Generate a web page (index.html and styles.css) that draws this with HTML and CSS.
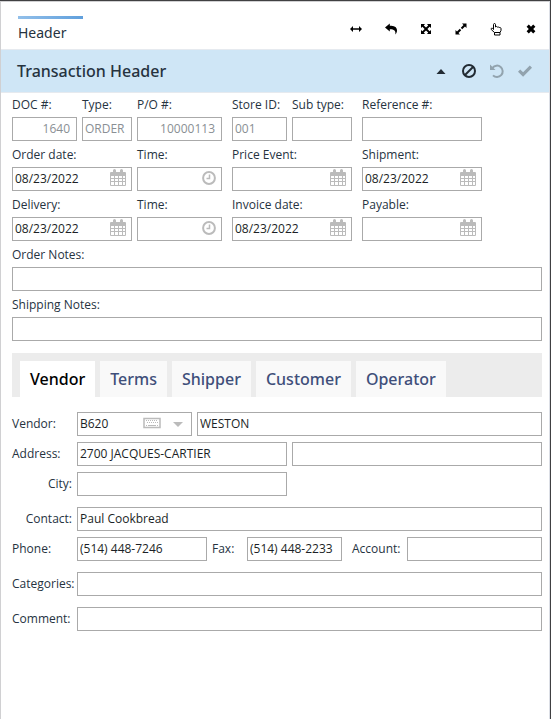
FILE: index.html
```html
<!DOCTYPE html>
<html lang="en">
<head>
<meta charset="utf-8">
<title>Transaction Header</title>
<link rel="stylesheet" href="styles.css">
</head>
<body>
<svg class="defs" aria-hidden="true">
  <symbol id="calendar" viewBox="0 0 16 18">
    <path fill="currentColor" d="M1 3h2V1.500a1.500 1.500 0 0 1 3 0V3h4V1.500a1.500 1.500 0 0 1 3 0V3h2a1 1 0 0 1 1 1v12a1 1 0 0 1-1 1H1a1 1 0 0 1-1-1V4a1 1 0 0 1 1-1z"/>
    <path fill="#fff" d="M1 7h3v2H1zM5 7h3v2H5zM9 7h3v2H9zM13 7h2v2h-2zM1 10h3v2H1zM5 10h3v2H5zM9 10h3v2H9zM13 10h2v2h-2zM1 13h3v3H1zM5 13h3v3H5zM9 13h3v3H9zM13 13h2v3h-2z"/>
  </symbol>
  <symbol id="clock" viewBox="0 0 14 14">
    <circle cx="7" cy="7" r="5.900" fill="none" stroke="currentColor" stroke-width="2"/>
    <path d="M7.500 3.500v4H4.500" fill="none" stroke="currentColor" stroke-width="1.500"/>
  </symbol>
</svg>
<main class="panel">
  <header class="top">
    <h1 class="top-title">Header</h1>
    <div class="tools">
      <button type="button" aria-label="Fit width"><svg viewBox="0 0 14 14"><path d="M1 7l3-3v2.200h6V4l3 3-3 3V7.800H4V10z"/></svg></button>
      <button type="button" aria-label="Back"><svg viewBox="0 0 14 14"><path d="M1 5.500L5.800 1.500v2.300c4 0 7.200 1 7.200 4.700 0 1.700-.7 2.900-1.700 4 .7-3.600-1-5.300-5.500-5.300v2.300z"/></svg></button>
      <button type="button" aria-label="Expand all"><svg viewBox="0 0 14 14"><path d="M2 2h4L4.800 3.400 7 5.600l2.200-2.200L8 2h4v4l-1.400-1.200L8.400 7l2.200 2.200L12 8v4H8l1.200-1.400L7 8.400l-2.200 2.200L6 12H2V8l1.400 1.200L5.600 7 3.400 4.800 2 6z"/></svg></button>
      <button type="button" aria-label="Enlarge"><svg viewBox="0 0 14 14"><path d="M8 1.500h4.500V6L11 4.500 8.200 7.200 6.800 5.800 9.500 3zM6 12.500H1.500V8L3 9.500l2.800-2.700 1.400 1.400L4.500 11z"/></svg></button>
      <button type="button" aria-label="Select"><svg viewBox="0 0 14 14"><path class="line" d="M4.500 7.500V2.500c0-1.300 2-1.300 2 0V5c.8-.8 1.700-.5 1.900.2.700-.5 1.500-.2 1.700.4.900-.4 1.900 0 1.900 1v1.900L11 10.500H5.500L2.300 7.600c-.8-.9.500-2 1.300-1.300zM5.500 10.500V13H11v-2.500"/></svg></button>
      <button type="button" aria-label="Close"><svg viewBox="0 0 14 14"><path d="M4.800 2.600L7 4.800l2.200-2.200 2.200 2.200L9.200 7l2.200 2.200-2.200 2.200L7 9.200l-2.200 2.200-2.200-2.200L4.800 7 2.600 4.800z"/></svg></button>
    </div>
  </header>

  <section class="bar">
    <h2 class="bar-title">Transaction Header</h2>
    <div class="actions">
      <button type="button" aria-label="Collapse"><svg viewBox="0 0 16 16"><path d="M3.500 11L8 6l4.500 5z"/></svg></button>
      <button type="button" aria-label="Cancel"><svg viewBox="0 0 16 16"><circle class="thick" cx="8" cy="8" r="6"/><path class="thick" d="M12 4l-8 8"/></svg></button>
      <button type="button" class="muted" aria-label="Undo"><svg viewBox="0 0 16 16"><path class="thick" d="M3.500 4.800A5.700 5.700 0 1 1 4 12.400"/><path d="M1 1.500V7h5.500z"/></svg></button>
      <button type="button" class="muted" aria-label="Accept"><svg viewBox="0 0 16 16"><path d="M1 8.800L3.200 6.500l2.900 2.800L12.800 2.600 15 4.800l-8.900 9z"/></svg></button>
    </div>
  </section>

  <form class="form">
    <div class="row">
      <div class="pair">
        <div class="field w65"><label for="doc">DOC #:</label><div class="box ro end"><input id="doc" value="1640" readonly></div></div>
        <div class="field w50"><label for="type">Type:</label><div class="box ro"><input id="type" value="ORDER" readonly></div></div>
        <div class="field w85"><label for="po">P/O #:</label><div class="box ro end"><input id="po" value="10000113" readonly></div></div>
      </div>
      <div class="pair">
        <div class="field w55"><label for="store">Store ID:</label><div class="box ro"><input id="store" value="001" readonly></div></div>
        <div class="field w60"><label for="sub">Sub type:</label><div class="box"><input id="sub"></div></div>
      </div>
      <div class="field w120"><label for="ref">Reference #:</label><div class="box"><input id="ref"></div></div>
    </div>

    <div class="row">
      <div class="pair">
        <div class="field w120"><label for="odate">Order date:</label><div class="box"><input id="odate" value="08/23/2022"><button type="button" aria-label="Pick order date"><svg class="cal"><use href="#calendar"/></svg></button></div></div>
        <div class="field w85"><label for="otime">Time:</label><div class="box"><input id="otime"><button type="button" aria-label="Pick order time"><svg class="clk"><use href="#clock"/></svg></button></div></div>
      </div>
      <div class="field w120"><label for="price">Price Event:</label><div class="box"><input id="price"><button type="button" aria-label="Pick price event"><svg class="cal"><use href="#calendar"/></svg></button></div></div>
      <div class="field w120"><label for="ship">Shipment:</label><div class="box"><input id="ship" value="08/23/2022"><button type="button" aria-label="Pick shipment date"><svg class="cal"><use href="#calendar"/></svg></button></div></div>
    </div>

    <div class="row">
      <div class="pair">
        <div class="field w120"><label for="ddate">Delivery:</label><div class="box"><input id="ddate" value="08/23/2022"><button type="button" aria-label="Pick delivery date"><svg class="cal"><use href="#calendar"/></svg></button></div></div>
        <div class="field w85"><label for="dtime">Time:</label><div class="box"><input id="dtime"><button type="button" aria-label="Pick delivery time"><svg class="clk"><use href="#clock"/></svg></button></div></div>
      </div>
      <div class="field w120"><label for="inv">Invoice date:</label><div class="box"><input id="inv" value="08/23/2022"><button type="button" aria-label="Pick invoice date"><svg class="cal"><use href="#calendar"/></svg></button></div></div>
      <div class="field w120"><label for="pay">Payable:</label><div class="box"><input id="pay"><button type="button" aria-label="Pick payable date"><svg class="cal"><use href="#calendar"/></svg></button></div></div>
    </div>

    <div class="field"><label for="onotes">Order Notes:</label><div class="box"><input id="onotes"></div></div>
    <div class="field"><label for="snotes">Shipping Notes:</label><div class="box"><input id="snotes"></div></div>

    <div class="tabs" role="tablist">
      <button type="button" role="tab" aria-selected="true">Vendor</button>
      <button type="button" role="tab" aria-selected="false">Terms</button>
      <button type="button" role="tab" aria-selected="false">Shipper</button>
      <button type="button" role="tab" aria-selected="false">Customer</button>
      <button type="button" role="tab" aria-selected="false">Operator</button>
    </div>

    <div class="details">
      <div class="line-row">
        <label for="vendor">Vendor:</label>
        <div class="box w115"><input id="vendor" value="B620"><button type="button" aria-label="Keyboard"><svg class="kbd" viewBox="0 0 18 12"><path d="M1 1.500h16v9H1z" fill="none" stroke="currentColor" stroke-width="1.500"/><path d="M3 3.500h12M4 5.500h12" fill="none" stroke="currentColor" stroke-dasharray="1 1"/><path d="M3 8.500h1M5 8.500h8M14 8.500h1" fill="none" stroke="currentColor"/></svg></button><button type="button" aria-label="Open vendor list"><svg class="caret" viewBox="0 0 10 5"><path d="M0 0h10L5 5z" fill="currentColor"/></svg></button></div>
        <div class="box grow"><input value="WESTON" aria-label="Vendor name"></div>
      </div>
      <div class="line-row">
        <label for="addr">Address:</label>
        <div class="box w210"><input id="addr" value="2700 JACQUES-CARTIER"></div>
        <div class="box grow"><input aria-label="Address line 2"></div>
      </div>
      <div class="line-row">
        <label class="right" for="city">City:</label>
        <div class="box w210"><input id="city"></div>
      </div>
      <div class="line-row spaced">
        <label class="right" for="contact">Contact:</label>
        <div class="box grow"><input id="contact" value="Paul Cookbread"></div>
      </div>
      <div class="line-row">
        <label for="phone">Phone:</label>
        <div class="box w130"><input id="phone" value="(514) 448-7246"></div>
        <label class="fax" for="fax">Fax:</label>
        <div class="box w95"><input id="fax" value="(514) 448-2233"></div>
        <label class="account" for="account">Account:</label>
        <div class="box grow"><input id="account"></div>
      </div>
      <div class="line-row spaced">
        <label for="cats">Categories:</label>
        <div class="box grow"><input id="cats"></div>
      </div>
      <div class="line-row spaced">
        <label for="comment">Comment:</label>
        <div class="box grow"><input id="comment"></div>
      </div>
    </div>
  </form>
</main>
</body>
</html>
```
FILE: styles.css
```css
* { box-sizing: border-box; }

body {
  margin: 0;
  border-top: 1px solid #404042;
  border-right: 1px solid #404042;
  background: #fff;
  color: #26333f;
  font: 12px/24px "Open Sans", "Noto Sans", sans-serif;
}

.defs { display: none; }

button {
  display: flex;
  align-items: center;
  justify-content: center;
  padding: 0;
  border: 0;
  background: none;
  color: inherit;
}

.panel {
  min-height: calc(100vh - 1px);
  border: 1px solid #d0d0d2;
  border-bottom: 0;
  border-right-color: #dcdfe6;
}

.top {
  display: flex;
  align-items: flex-start;
  justify-content: space-between;
  height: 47px;
  padding: 14px 11px 0 17px;
}

.top-title {
  width: 65px;
  margin: 0;
  padding-top: 2px;
  border-top: 3px solid;
  border-image: linear-gradient(90deg, #93c0ea, #5f9fdc) 1;
  font: 400 14px/24px "Noto Sans", sans-serif;
}

.tools, .actions { display: flex; }
.tools { gap: 21px; padding-top: 6px; color: #000; }
.tools svg { width: 14px; height: 14px; fill: currentColor; }
.tools .line { fill: none; stroke: currentColor; }

.bar {
  display: flex;
  align-items: center;
  justify-content: space-between;
  height: 44px;
  padding: 0 16px;
  border: solid #e6eaef;
  border-width: 1px 0;
  background: #cfe6f6;
}

.bar-title { margin: 0; font: 500 16px/24px "Noto Sans", sans-serif; }
.actions { gap: 12px; color: #222b33; }
.actions svg { width: 16px; height: 16px; fill: currentColor; }
.actions .thick { fill: none; stroke: currentColor; stroke-width: 2; }
.actions .muted { color: #92a3ae; }

.form {
  display: flex;
  flex-direction: column;
  gap: 2px;
  padding: 0 7px 24px 11px;
}

.row { display: flex; gap: 10px; }
.pair { display: flex; gap: 5px; }
.field { display: flex; flex-direction: column; }
label { white-space: nowrap; }

.box {
  display: flex;
  align-items: center;
  height: 24px;
  border: 1px solid #aaa;
  background: #fff;
}

.box input {
  flex: 1;
  width: 0;
  min-width: 0;
  height: 22px;
  padding: 0 2px;
  border: 0;
  outline: 0;
  background: none;
  color: #1b1f26;
  font: inherit;
}

.ro input { color: #8a8f94; }
.end input { padding-right: 6px; text-align: right; }
.box button { padding: 0 5px 2px; color: #bbb; }
.cal { width: 16px; height: 18px; }
.clk { width: 14px; height: 14px; }
.kbd { width: 18px; height: 12px; }
.caret { width: 10px; height: 5px; }
.box button + button { padding: 0 8px 0 7px; }

.w50 { width: 50px; }
.w55 { width: 55px; }
.w60 { width: 60px; }
.w65 { width: 65px; }
.w85 { width: 85px; }
.w95 { width: 95px; }
.w115 { width: 115px; }
.w120 { width: 120px; }
.w130 { width: 130px; }
.w210 { width: 210px; }
.grow { flex: 1; }

.tabs {
  display: flex;
  gap: 5px;
  margin-top: 10px;
  padding: 8px 8px 0;
  background: #ececec;
}

.tabs button {
  height: 36px;
  padding: 0 10px;
  background: #f9f9f9;
  color: #3f4f7a;
  font: 500 16px/24px "Noto Sans", sans-serif;
}

.tabs [aria-selected="true"] { background: #fff; color: #000; }

.details {
  display: flex;
  flex-direction: column;
  gap: 6px;
  padding-top: 13px;
}

.line-row { display: flex; gap: 5px; }
.line-row > label:first-child { width: 60px; }
.line-row > .right { text-align: right; }
.spaced { margin-top: 5px; }
.fax { width: 30px; }
.account { width: 55px; padding-left: 5px; }
```
